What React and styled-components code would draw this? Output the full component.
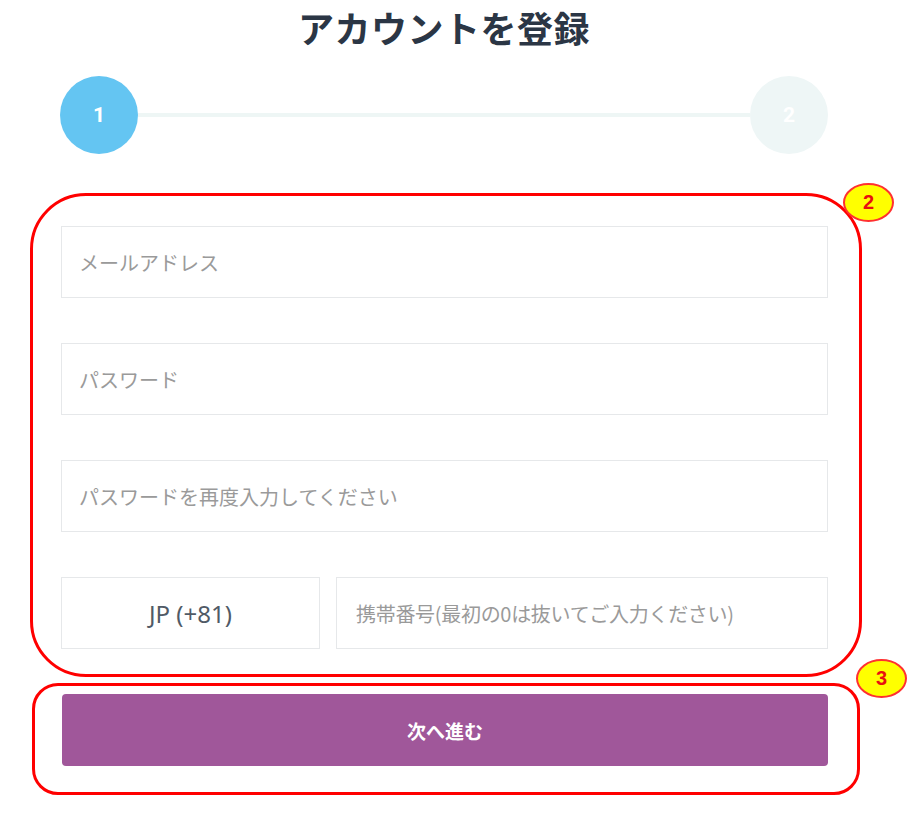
import React from "react";
import styled, { createGlobalStyle } from "styled-components";

const Global = createGlobalStyle`
  html, body { margin: 0; padding: 0; background: #ffffff; }
  body { font-family: "Noto Sans", "Noto Sans CJK JP", sans-serif; }
  * { box-sizing: border-box; }
`;

const Page = styled.div`
  width: 920px;
  height: 821px;
  padding-left: 60px;
  overflow: hidden;
`;

const Column = styled.div`
  width: 768px;
  display: flex;
  flex-direction: column;
`;

const Title = styled.h1`
  margin: 5px 0 0;
  font-family: "Noto Sans CJK JP", sans-serif;
  font-size: 36px;
  line-height: 44px;
  font-weight: 700;
  color: #2b3645;
  text-align: center;
  letter-spacing: 0.5px;
`;

const Stepper = styled.div`
  margin-top: 27px;
  display: flex;
  align-items: center;
`;

const StepCircle = styled.div`
  width: 78px;
  height: 78px;
  border-radius: 50%;
  flex-shrink: 0;
  background: ${(p) => (p.$active ? "#64c5f2" : "#eef6f6")};
  color: #ffffff;
  display: flex;
  align-items: center;
  justify-content: center;
  font-family: "Roboto", sans-serif;
  font-weight: 700;
  font-size: 21px;
`;

const StepLine = styled.div`
  flex: 1;
  height: 4px;
  background: #eef6f5;
`;

const Annotation = styled.div`
  position: relative;
  border: 3px solid #ff0000;
  border-radius: ${(p) => p.$radius}px;
  margin-left: ${(p) => p.$left}px;
  margin-top: ${(p) => p.$top}px;
  width: ${(p) => p.$width}px;
  padding: ${(p) => p.$pad};
`;

const Badge = styled.div`
  position: absolute;
  left: ${(p) => p.$x}px;
  top: ${(p) => p.$y}px;
  width: 51px;
  height: 39px;
  border-radius: 50%;
  background: #ffff00;
  border: 2px solid #ff3030;
  display: flex;
  align-items: center;
  justify-content: center;
  color: #e81010;
  font-family: "Liberation Sans", sans-serif;
  font-weight: 700;
  font-size: 20px;
`;

const Form = styled.div`
  display: flex;
  flex-direction: column;
  gap: 45px;
`;

const Field = styled.div`
  height: 72px;
  border: 1.5px solid #e6e8ea;
  display: flex;
  align-items: center;
  padding-left: ${(p) => p.$pad ?? 17}px;
  justify-content: ${(p) => (p.$center ? "center" : "flex-start")};
  font-family: "Noto Sans CJK JP", sans-serif;
  font-size: ${(p) => p.$size ?? 20}px;
  color: ${(p) => p.$color ?? "#9a9a9a"};
  letter-spacing: ${(p) => p.$ls ?? 0}px;
  flex: ${(p) => p.$flex ?? "none"};
  width: ${(p) => (p.$w ? `${p.$w}px` : "auto")};
  white-space: nowrap;
`;

const PhoneRow = styled.div`
  display: flex;
  gap: 16px;
`;

const CodeText = styled.span`
  font-family: "Noto Sans", sans-serif;
  font-size: 24px;
  color: #505a66;
`;

const Button = styled.button`
  width: 766px;
  height: 72px;
  border: none;
  border-radius: 4px;
  background: #a0579a;
  color: #ffffff;
  font-family: "Noto Sans CJK JP", sans-serif;
  font-weight: 700;
  font-size: 19px;
  display: flex;
  align-items: center;
  justify-content: center;
  padding: 0;
`;

export default function App() {
  return (
    <>
      <Global />
      <Page>
        <Column>
          <Title>アカウントを登録</Title>
          <Stepper>
            <StepCircle $active>1</StepCircle>
            <StepLine />
            <StepCircle>2</StepCircle>
          </Stepper>
          <Annotation $radius={56} $left={-30} $top={39} $width={832} $pad="30px 31px 25px 28px">
            <Badge $x={810} $y={-13}>2</Badge>
            <Form>
              <Field>メールアドレス</Field>
              <Field>パスワード</Field>
              <Field>パスワードを再度入力してください</Field>
              <PhoneRow>
                <Field $w={259} $pad={0} $center>
                  <CodeText>JP (+81)</CodeText>
                </Field>
                <Field $flex="1" $size={20} $ls={-0.3} $pad={19}>
                  携帯番号(最初の0は抜いてご入力ください)
                </Field>
              </PhoneRow>
            </Form>
          </Annotation>
          <Annotation $radius={26} $left={-28} $top={6} $width={828} $pad="8px 29px 26px 27px">
            <Badge $x={821} $y={-27}>3</Badge>
            <Button>次へ進む</Button>
          </Annotation>
        </Column>
      </Page>
    </>
  );
}
